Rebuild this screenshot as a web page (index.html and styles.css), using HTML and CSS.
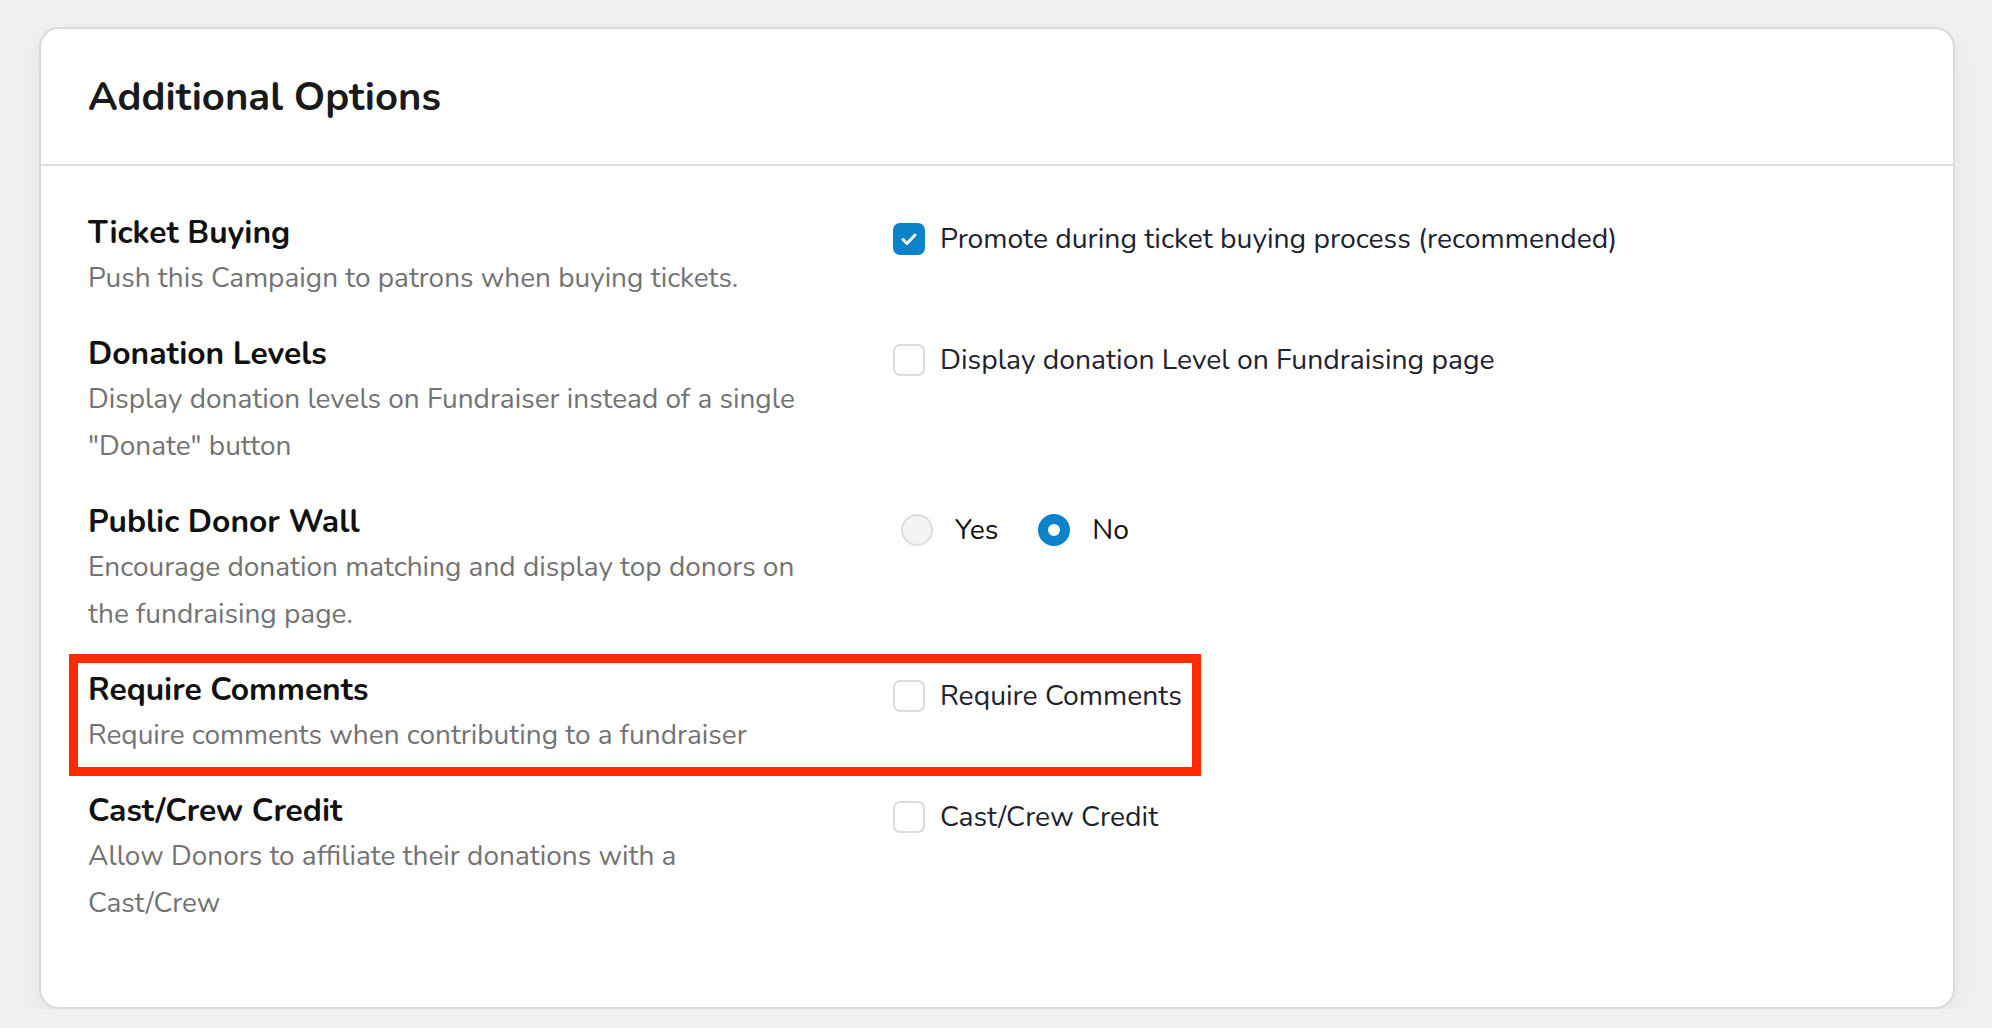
FILE: index.html
```html
<!DOCTYPE html>
<html lang="en">
<head>
    <meta charset="UTF-8">
    <meta name="viewport" content="width=device-width, initial-scale=1.0">
    <title>Additional Options</title>
    <link rel="stylesheet" href="styles.css">
</head>
<body>
    <div class="card">
        <div class="card-header">
            <h2>Additional Options</h2>
        </div>

        <div class="card-body">
            <div class="option-row">
                <div class="option-info">
                    <div class="option-title">Ticket Buying</div>
                    <div class="option-desc">Push this Campaign to patrons when buying tickets.</div>
                </div>
                <div class="option-control">
                    <label class="check">
                        <span class="box checked">
                            <svg viewBox="0 0 32 32" width="32" height="32">
                                <polyline points="10,16.5 14,20.5 22,12" fill="none" stroke="#fff" stroke-width="3" stroke-linecap="round" stroke-linejoin="round"/>
                            </svg>
                        </span>
                        Promote during ticket buying process (recommended)
                    </label>
                </div>
            </div>

            <div class="option-row">
                <div class="option-info">
                    <div class="option-title">Donation Levels</div>
                    <div class="option-desc">Display donation levels on Fundraiser instead of a single "Donate" button</div>
                </div>
                <div class="option-control">
                    <label class="check"><span class="box"></span>Display donation Level on Fundraising page</label>
                </div>
            </div>

            <div class="option-row">
                <div class="option-info">
                    <div class="option-title">Public Donor Wall</div>
                    <div class="option-desc">Encourage donation matching and display top donors on the fundraising page.</div>
                </div>
                <div class="option-control radios">
                    <label class="radio"><span class="dot"></span>Yes</label>
                    <label class="radio"><span class="dot selected"></span>No</label>
                </div>
            </div>

            <div class="option-row marked">
                <div class="option-info">
                    <div class="option-title">Require Comments</div>
                    <div class="option-desc">Require comments when contributing to a fundraiser</div>
                </div>
                <div class="option-control">
                    <label class="check"><span class="box"></span>Require Comments</label>
                </div>
                <div class="callout"></div>
            </div>

            <div class="option-row">
                <div class="option-info">
                    <div class="option-title">Cast/Crew Credit</div>
                    <div class="option-desc">Allow Donors to affiliate their donations with a Cast/Crew</div>
                </div>
                <div class="option-control">
                    <label class="check"><span class="box"></span>Cast/Crew Credit</label>
                </div>
            </div>
        </div>
    </div>
</body>
</html>
```

FILE: styles.css
```css
body {
    font-family: "Nunito", Lato, "Noto Sans", sans-serif;
    background-color: #f0f0f0;
    margin: 0;
    padding: 27px 37px 0 39px;
}
.card {
    background-color: white;
    border: 2px solid #dadada;
    border-radius: 20px;
    box-shadow: 0 12px 30px rgba(0, 0, 0, 0.05);
}
.card-header {
    height: 135px;
    display: flex;
    align-items: center;
    padding-left: 47px;
    border-bottom: 2px solid #dcdcdc;
}
h2 {
    margin: 0;
    font-size: 40px;
    font-weight: 700;
    color: #1a1a1a;
}
.card-body {
    padding: 47px 47px 80px;
    display: flex;
    flex-direction: column;
    gap: 32px;
}
.option-row {
    display: grid;
    grid-template-columns: 805px 1fr;
    align-items: start;
    position: relative;
}
.option-info {
    max-width: 716px;
}
.option-title {
    font-size: 31.8px;
    font-weight: 700;
    line-height: 40px;
    color: #111;
    margin-bottom: 2px;
}
.option-desc {
    font-size: 28px;
    line-height: 47px;
    color: #737373;
}
.option-control {
    padding-top: 6px;
}
.check {
    display: flex;
    align-items: center;
    gap: 15px;
    font-size: 28.3px;
    color: #1e2230;
}
.box {
    width: 32px;
    height: 32px;
    box-sizing: border-box;
    border: 2px solid #dcdcdc;
    border-radius: 7px;
    display: flex;
}
.box.checked {
    background-color: #0a83cb;
    border-color: #0a83cb;
}
.box svg {
    margin: -2px;
}
.radios {
    display: flex;
    align-items: flex-start;
    padding-top: 8px;
    padding-left: 8px;
    gap: 40px;
}
.radio {
    display: flex;
    align-items: center;
    gap: 22px;
    font-size: 28.3px;
    color: #111;
}
.dot {
    width: 32px;
    height: 32px;
    box-sizing: border-box;
    border-radius: 50%;
    border: 2px solid #dcdcdc;
    background-color: #f4f4f4;
}
.dot.selected {
    border: 10px solid #0a83cb;
    background-color: white;
}
/* red frame drawn round the highlighted row */
.callout {
    position: absolute;
    left: -19px;
    top: -16px;
    bottom: -17px;
    width: 1132px;
    box-sizing: border-box;
    border: 9px solid #ff2a00;
}
```
